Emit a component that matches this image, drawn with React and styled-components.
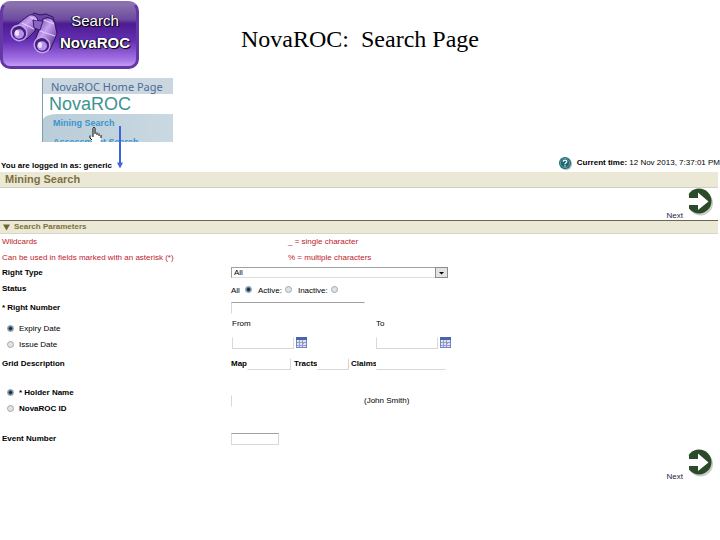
import React from 'react';
import styled, { createGlobalStyle } from 'styled-components';

const App = () => {
    return (
      <Page>
        <GlobalStyle />
        <Header>
            <SearchButton type="button">
                <Binoculars />
                <ButtonText>
                    <span>Search</span>
                    <strong>NovaROC</strong>
                </ButtonText>
            </SearchButton>
            <PageTitle>NovaROC:&nbsp; Search Page</PageTitle>
        </Header>
        <Menu>
            <MenuHome href="#home">NovaROC Home Page</MenuHome>
            <MenuBrand>NovaROC</MenuBrand>
            <MenuList>
                <MenuLink href="#mining">Mining Search</MenuLink>
                <MenuLink href="#assessment">Assessment Search</MenuLink>
            </MenuList>
            <Pointer />
            <FlowArrow />
        </Menu>
        <StatusBar>
            <b>You are logged in as: generic</b>
            <Clock>
                <HelpIcon />
                <span><b>Current time:</b> 12 Nov 2013, 7:37:01 PM</span>
            </Clock>
        </StatusBar>
        <Heading>Mining Search</Heading>
        <NextRow>
            <NextLink />
        </NextRow>
        <SectionBar>
            <svg width="7" height="7" viewBox="0 0 7 7"><path d="M0 0.5H7L3.5 6.5Z" fill="#6f6534" /></svg>
            Search Parameters
        </SectionBar>
        <form>
            <Row $height={16} $red>
                <span>Wildcards</span>
                <Hint>_ = single character</Hint>
            </Row>
            <Row $height={15} $red>
                <span>Can be used in fields marked with an asterisk (*)</span>
                <Hint>% = multiple characters</Hint>
            </Row>
            <Row $height={15}>
                <FieldLabel htmlFor="rightType">Right Type</FieldLabel>
                <SelectBox>
                    <Select id="rightType" defaultValue="All">
                        <option>All</option>
                    </Select>
                    <SelectArrow viewBox="0 0 13 11">
                        <rect x="0.5" y="0.5" width="12" height="10" fill="#e3e3e3" stroke="#8c8c8c" />
                        <path d="M4 5H9L6.5 7.5Z" fill="#000" />
                    </SelectArrow>
                </SelectBox>
            </Row>
            <Row $height={17}>
                <FieldLabel as="span">Status</FieldLabel>
                <StatusOptions>
                    <RadioLabel $gap={5}>All<Radio name="status" defaultChecked /></RadioLabel>
                    <RadioLabel $gap={3}>Active:<Radio name="status" /></RadioLabel>
                    <RadioLabel $gap={3}>Inactive:<Radio name="status" /></RadioLabel>
                </StatusOptions>
            </Row>
            <Row $height={21}>
                <FieldLabel htmlFor="rightNumber">* Right Number</FieldLabel>
                <TextBox id="rightNumber" $width={134} $edges="top left" />
            </Row>
            <Row $height={36}>
                <RadioStack $top={2}>
                    <RadioLabel $gap={5}><Radio name="date" defaultChecked />Expiry Date</RadioLabel>
                    <RadioLabel $gap={5}><Radio name="date" />Issue Date</RadioLabel>
                </RadioStack>
                <Dates>
                    <DateField id="from" label="From" />
                    <DateField id="to" label="To" />
                </Dates>
            </Row>
            <Row $height={19}>
                <FieldLabel as="span">Grid Description</FieldLabel>
                <GridFields>
                    <FieldLabel htmlFor="map">Map</FieldLabel>
                    <TextBox id="map" $width={44} $edges="right bottom" />
                    <FieldLabel htmlFor="tracts">Tracts</FieldLabel>
                    <TextBox id="tracts" $width={32} $edges="right bottom" />
                    <FieldLabel htmlFor="claims">Claims</FieldLabel>
                    <TextBox id="claims" $width={70} $edges="bottom" />
                </GridFields>
            </Row>
            <Row $height={56}>
                <RadioStack $bold>
                    <RadioLabel $gap={5}><Radio name="holder" defaultChecked />* Holder Name</RadioLabel>
                    <RadioLabel $gap={5}><Radio name="holder" />NovaROC ID</RadioLabel>
                </RadioStack>
                <HolderField>
                    <TextBox aria-label="Holder Name" $width={133} $edges="left" />
                    (John Smith)
                </HolderField>
            </Row>
            <Row $height={20}>
                <FieldLabel htmlFor="eventNumber">Event Number</FieldLabel>
                <TextBox id="eventNumber" $width={48} $edges="top left right bottom" />
            </Row>
            <NextRow>
                <NextLink />
            </NextRow>
        </form>
      </Page>
    );
};

const DateField = ({ id, label }) => (
    <DateColumn>
        <label htmlFor={id}>{label}</label>
        <DateInput>
            <TextBox id={id} $width={62} $edges="left right bottom" />
            <CalendarButton type="button" aria-label={`${label} calendar`}>
                <svg width="11" height="11" viewBox="0 0 11 11">
                    <rect width="11" height="11" fill="#6f86c4" />
                    <rect width="11" height="3" fill="#4a64ac" />
                    <path d="M1 3h9v7H1z" fill="#dfe6f5" />
                    <path d="M3.5 3v7M6.5 3v7M1 5.5h9M1 8.5h9" stroke="#8b9dd0" />
                    <path d="M6 5h2v2H6z" fill="#d08a96" />
                </svg>
            </CalendarButton>
        </DateInput>
    </DateColumn>
);

const NextLink = () => (
    <NextAnchor href="#next">
        <span>Next</span>
        <svg width="28" height="28" viewBox="0 0 28 28">
            <circle cx="14.5" cy="15" r="12.5" fill="#c9cdc4" />
            <circle cx="13" cy="13" r="12.5" fill="#2b4a2a" />
            <path d="M0 7.5L3 6V21L0 19Z" fill="#fff" />
            <path d="M0 10H12V4.5L22.5 13.5L12 22V17H0Z" fill="#fff" />
        </svg>
    </NextAnchor>
);

const HelpIcon = () => (
    <svg width="13" height="13" viewBox="0 0 13 13">
        <circle cx="7" cy="7" r="6" fill="#a9b8bb" />
        <circle cx="6" cy="6" r="6" fill="#1d6671" />
        <circle cx="6" cy="6" r="4.6" fill="none" stroke="#6fa9b0" strokeWidth="0.8" />
        <path d="M4.2 4.8C4.2 2.4 8 2.5 7.8 4.8C7.7 5.9 6 5.8 6 7.2M6 8.3V9.5" fill="none" stroke="#fff" strokeWidth="1.2" />
    </svg>
);

const Binoculars = () => (
    <svg width="50" height="44" viewBox="0 0 50 44">
        <defs>
            <linearGradient id="barrel" x1="0" y1="0" x2="1" y2="1">
                <stop offset="0" stopColor="#4b2a86" />
                <stop offset="0.45" stopColor="#c9a2f2" />
                <stop offset="1" stopColor="#3c1a78" />
            </linearGradient>
        </defs>
        <path d="M20 5L25 1L31 3L37 2L44 5L46 13L34 18L23 13Z" fill="#6b46a8" stroke="#2f145f" />
        <path d="M19 4C22 1 29 4 29 9L26 19L18 27L3 19L11 10Z" fill="url(#barrel)" stroke="#2f145f" />
        <path d="M33 8C38 3 45 7 46 12L48 22L41 38L25 31L30 18Z" fill="url(#barrel)" stroke="#2f145f" />
        <path d="M24 8L34 9L31 18L25 16Z" fill="#8a63c4" stroke="#3a1b70" />
        <path d="M13 11L25 17M31 19L46 24M21 5L28 8M35 8L45 12" stroke="#e0c8fa" strokeWidth="1.3" />
        <ellipse cx="10" cy="21" rx="8" ry="7.5" fill="#43217c" stroke="#c5a2ee" strokeWidth="1.5" transform="rotate(35 10 21)" />
        <ellipse cx="10" cy="22" rx="5" ry="4.7" fill="#b990ee" />
        <ellipse cx="8" cy="21" rx="2" ry="3" fill="#efe0ff" />
        <ellipse cx="33" cy="33" rx="8" ry="7.5" fill="#43217c" stroke="#c5a2ee" strokeWidth="1.5" transform="rotate(35 33 33)" />
        <ellipse cx="33" cy="34" rx="5" ry="4.7" fill="#b990ee" />
        <ellipse cx="31" cy="33" rx="2" ry="3" fill="#efe0ff" />
    </svg>
);

const Pointer = () => (
    <PointerIcon viewBox="0 0 13 17">
        <path d="M4 1.5C4 0 6 0 6 1.5V6L11 7.5C12.5 8 12.5 10 12 12L11 16.5H4L1 11C0 9 2 8.5 4 10Z" fill="#fff" />
        <path d="M4 10V1.5C4 0 6 0 6 1.5V7M8 5.5V8M10 6.5V9M12 8V11M1 8.5V11L3 13" fill="none" stroke="#000" />
    </PointerIcon>
);

const FlowArrow = () => (
    <FlowArrowIcon viewBox="0 0 7 43">
        <path d="M3 0V38" stroke="#3c66dc" strokeWidth="2" />
        <path d="M0 36.5H6L3 42.5Z" fill="#3c66dc" />
    </FlowArrowIcon>
);

export default App;

const GlobalStyle = createGlobalStyle`
    body {
        margin: 0;
        background: #fff;
    }
    * {
        box-sizing: border-box;
    }
`

const Page = styled.main`
    font-family: "Liberation Sans", Arial, sans-serif;
    font-size: 8px;
    line-height: 12px;
    color: #000;
`

const Header = styled.header`
    display: grid;
    grid-template-columns: 1fr auto 1fr;
    padding-top: 1px;
`

const SearchButton = styled.button`
    display: flex;
    align-items: center;
    gap: 1px;
    justify-self: start;
    width: 139px;
    height: 68px;
    padding: 0 0 2px 6px;
    border: 3px solid #6337a6;
    border-top-color: #8b6fb4;
    border-radius: 10px;
    background: linear-gradient(#8a73ac 0%, #6d4a9f 25%, #4b1c91 32%, #6630b5 60%, #a574e6 90%, #c49cf3 100%);
    color: #fff;
    font-family: inherit;
`

const ButtonText = styled.span`
    display: flex;
    flex-direction: column;
    align-items: center;
    padding-bottom: 4px;
    font-size: 15px;
    line-height: 22px;
    text-shadow: 1px 1px 1px #000, -1px 0 1px #000;
`

const PageTitle = styled.h1`
    margin: 0;
    padding-top: 24px;
    font-family: "Liberation Serif", "Times New Roman", serif;
    font-size: 24px;
    line-height: 28px;
    font-weight: normal;
`

const Menu = styled.nav`
    position: relative;
    width: 131px;
    margin: 9px 0 0 42px;
    border-left: 1px solid #7f9fae;
`

const MenuHome = styled.a`
    display: block;
    height: 16px;
    padding-left: 8px;
    background: #cad7e0;
    color: #4c6c94;
    font-family: "Noto Sans", sans-serif;
    font-size: 11px;
    line-height: 18px;
    white-space: nowrap;
    text-decoration: none;
`

const MenuBrand = styled.div`
    height: 20px;
    padding-left: 6px;
    background: #fff;
    color: #3c9490;
    font-size: 18px;
    line-height: 21px;
`

const MenuList = styled.div`
    height: 28px;
    padding-left: 10px;
    overflow: hidden;
    border-top-left-radius: 14px 6px;
    background: linear-gradient(90deg, #b9cdd8, #cad8e1);
`

const MenuLink = styled.a`
    display: block;
    color: #3c94cc;
    font-size: 9px;
    line-height: 19px;
    font-weight: bold;
    text-decoration: none;
`

const PointerIcon = styled.svg`
    position: absolute;
    left: 46px;
    top: 49px;
    width: 13px;
    height: 17px;
`

const FlowArrowIcon = styled.svg`
    position: absolute;
    left: 74px;
    top: 48px;
    width: 7px;
    height: 43px;
`

const StatusBar = styled.div`
    display: flex;
    justify-content: space-between;
    align-items: flex-end;
    height: 30px;
    padding-left: 1px;
`

const Clock = styled.div`
    display: flex;
    gap: 5px;
    padding-bottom: 2px;
`

const Heading = styled.h2`
    margin: 0 2px 0 0;
    padding-left: 5px;
    border-bottom: 1px solid #cfcfc4;
    background: #ece8d6;
    color: #7c7140;
    font-size: 11px;
    line-height: 15px;
`

const NextRow = styled.div`
    display: flex;
    justify-content: flex-end;
    height: 32px;
    padding-right: 6px;
`

const NextAnchor = styled.a`
    display: flex;
    align-items: flex-end;
    gap: 3px;
    height: 28px;
    color: #1c2440;
    text-decoration: none;

    span {
        line-height: 10px;
        margin-bottom: -5px;
    }
`

const SectionBar = styled.h3`
    display: flex;
    align-items: center;
    gap: 4px;
    margin: 0 2px 0 0;
    padding-left: 3px;
    border-top: 1px solid #6c6450;
    border-bottom: 1px solid #d8d6c8;
    background: #ece8d6;
    color: #7c7140;
    font-size: 8px;
    line-height: 12px;
`

const Row = styled.div`
    display: grid;
    grid-template-columns: 229px 1fr;
    align-items: center;
    min-height: ${props => props.$height}px;
    padding-left: 2px;
    color: ${props => props.$red ? '#c0202c' : '#000'};
`

const Hint = styled.span`
    padding-left: 57px;
`

const FieldLabel = styled.label`
    font-weight: bold;
`

const SelectBox = styled.div`
    position: relative;
    display: flex;
    width: 217px;
`

const Select = styled.select`
    appearance: none;
    width: 100%;
    height: 11px;
    padding: 0 2px;
    border: 1px solid #a0a0a0;
    border-bottom-color: #ddd;
    border-radius: 0;
    background: #fff;
    color: #000;
    font-family: inherit;
    font-size: 8px;
    line-height: 9px;
`

const SelectArrow = styled.svg`
    position: absolute;
    right: 0;
    top: 0;
    width: 13px;
    height: 11px;
    pointer-events: none;
`

const StatusOptions = styled.div`
    display: flex;
    gap: 6px;
    padding-top: 4px;
`

const RadioLabel = styled.label`
    display: flex;
    align-items: center;
    gap: ${props => props.$gap}px;
`

const Radio = styled.input.attrs({ type: 'radio' })`
    appearance: none;
    width: 7px;
    height: 7px;
    margin: 0 0 2px;
    border: 1px solid #a2a8ac;
    border-radius: 50%;
    background: #e2e2e2;

    &:checked {
        border-color: #8198a8;
        background: radial-gradient(circle, #123048 0 1px, #b5c8d4 3px);
    }
`

const RadioStack = styled.div`
    padding: ${props => props.$top || 0}px 0 0 5px;
    font-weight: ${props => props.$bold ? 'bold' : 'normal'};

    ${RadioLabel} {
        height: 16px;
    }
`

const edgeColor = (props, edge) => {
    if (!props.$edges.includes(edge)) return 'transparent';
    return edge === 'top' ? '#a0a0a0' : '#d8d8d8';
}

const TextBox = styled.input.attrs({ type: 'text' })`
    width: ${props => props.$width}px;
    height: 12px;
    padding: 0 2px;
    border: 1px solid;
    border-color: ${props => ['top', 'right', 'bottom', 'left'].map(edge => edgeColor(props, edge)).join(' ')};
    background: #fff;
    font-family: inherit;
    font-size: 8px;
`

const Dates = styled.div`
    display: flex;
    align-self: start;
    gap: 69px;
    padding-left: 1px;
`

const DateColumn = styled.div`
    display: flex;
    flex-direction: column;
    gap: 7px;
`

const DateInput = styled.div`
    display: flex;
    gap: 2px;
`

const CalendarButton = styled.button`
    display: flex;
    padding: 0;
    border: 0;
    background: none;
`

const GridFields = styled.div`
    display: grid;
    grid-template-columns: 16px 47px 23px 34px 25px 1fr;
    align-items: center;
`

const HolderField = styled.div`
    display: flex;
    align-items: center;
`
